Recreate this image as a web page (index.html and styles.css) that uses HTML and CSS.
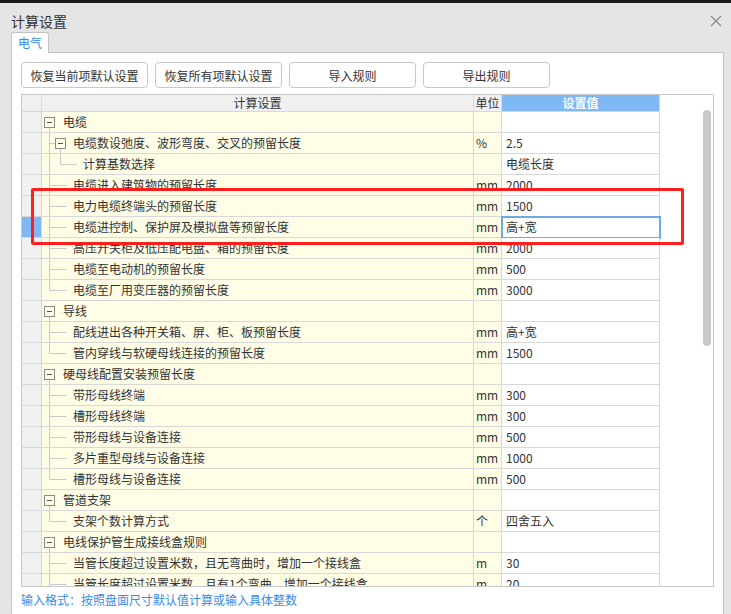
FILE: index.html
```html
<!DOCTYPE html>
<html lang="zh-CN">
<head>
<meta charset="utf-8">
<title>计算设置</title>
<link rel="stylesheet" href="styles.css">
</head>
<body>
<div class="topbar"></div>
<div class="titlebar">
  <span class="title">计算设置</span>
  <svg class="close" width="12" height="12" viewBox="0 0 12 12"><path d="M1 1L11 11M11 1L1 11"/></svg>
</div>
<div class="tabs"><div class="tab">电气</div></div>
<div class="panel">
  <div class="toolbar">
    <button class="btn">恢复当前项默认设置</button>
    <button class="btn">恢复所有项默认设置</button>
    <button class="btn">导入规则</button>
    <button class="btn">导出规则</button>
  </div>
  <div class="grid">
    <div class="table">
      <div class="row head">
        <div class="rh"></div>
        <div class="h-name">计算设置</div>
        <div class="h-unit">单位</div>
        <div class="h-val">设置值</div>
      </div>

      <div class="row">
        <div class="rh"></div>
        <div class="c-name"><svg class="tw" width="21" height="20"><rect class="bx" x="2.5" y="5.5" width="10" height="10"/><path class="mn" d="M5 10.5h5"/><path class="ln" d="M7.5 16V20"/></svg>电缆</div>
        <div class="c-unit"></div>
        <div class="c-val"></div>
      </div>
      <div class="row">
        <div class="rh"></div>
        <div class="c-name"><svg class="tw" width="31" height="20"><path class="ln" d="M7.5 0V20M8 10.5h5M18.5 16V20"/><rect class="bx" x="13.5" y="5.5" width="10" height="10"/><path class="mn" d="M16 10.5h5"/></svg>电缆数设弛度、波形弯度、交叉的预留长度</div>
        <div class="c-unit">%</div>
        <div class="c-val">2.5</div>
      </div>
      <div class="row">
        <div class="rh"></div>
        <div class="c-name"><svg class="tw" width="41" height="20"><path class="ln" d="M7.5 0V20M18.5 0V10.5M18.5 10.5H35"/></svg>计算基数选择</div>
        <div class="c-unit"></div>
        <div class="c-val">电缆长度</div>
      </div>
      <div class="row">
        <div class="rh"></div>
        <div class="c-name"><svg class="tw" width="31" height="20"><path class="ln" d="M7.5 0V20M7.5 10.5H24.5"/></svg>电缆进入建筑物的预留长度</div>
        <div class="c-unit">mm</div>
        <div class="c-val">2000</div>
      </div>
      <div class="row">
        <div class="rh"></div>
        <div class="c-name"><svg class="tw" width="31" height="20"><path class="ln" d="M7.5 0V20M7.5 10.5H24.5"/></svg>电力电缆终端头的预留长度</div>
        <div class="c-unit">mm</div>
        <div class="c-val">1500</div>
      </div>
      <div class="row sel">
        <div class="rh"></div>
        <div class="c-name"><svg class="tw" width="31" height="20"><path class="ln" d="M7.5 0V20M7.5 10.5H24.5"/></svg>电缆进控制、保护屏及模拟盘等预留长度</div>
        <div class="c-unit">mm</div>
        <div class="c-val">高+宽</div>
      </div>
      <div class="row">
        <div class="rh"></div>
        <div class="c-name"><svg class="tw" width="31" height="20"><path class="ln" d="M7.5 0V20M7.5 10.5H24.5"/></svg>高压开关柜及低压配电盘、箱的预留长度</div>
        <div class="c-unit">mm</div>
        <div class="c-val">2000</div>
      </div>
      <div class="row">
        <div class="rh"></div>
        <div class="c-name"><svg class="tw" width="31" height="20"><path class="ln" d="M7.5 0V20M7.5 10.5H24.5"/></svg>电缆至电动机的预留长度</div>
        <div class="c-unit">mm</div>
        <div class="c-val">500</div>
      </div>
      <div class="row">
        <div class="rh"></div>
        <div class="c-name"><svg class="tw" width="31" height="20"><path class="ln" d="M7.5 0V10.5M7.5 10.5H24.5"/></svg>电缆至厂用变压器的预留长度</div>
        <div class="c-unit">mm</div>
        <div class="c-val">3000</div>
      </div>

      <div class="row">
        <div class="rh"></div>
        <div class="c-name"><svg class="tw" width="21" height="20"><rect class="bx" x="2.5" y="5.5" width="10" height="10"/><path class="mn" d="M5 10.5h5"/><path class="ln" d="M7.5 16V20"/></svg>导线</div>
        <div class="c-unit"></div>
        <div class="c-val"></div>
      </div>
      <div class="row">
        <div class="rh"></div>
        <div class="c-name"><svg class="tw" width="31" height="20"><path class="ln" d="M7.5 0V20M7.5 10.5H24.5"/></svg>配线进出各种开关箱、屏、柜、板预留长度</div>
        <div class="c-unit">mm</div>
        <div class="c-val">高+宽</div>
      </div>
      <div class="row">
        <div class="rh"></div>
        <div class="c-name"><svg class="tw" width="31" height="20"><path class="ln" d="M7.5 0V10.5M7.5 10.5H24.5"/></svg>管内穿线与软硬母线连接的预留长度</div>
        <div class="c-unit">mm</div>
        <div class="c-val">1500</div>
      </div>

      <div class="row">
        <div class="rh"></div>
        <div class="c-name"><svg class="tw" width="21" height="20"><rect class="bx" x="2.5" y="5.5" width="10" height="10"/><path class="mn" d="M5 10.5h5"/><path class="ln" d="M7.5 16V20"/></svg>硬母线配置安装预留长度</div>
        <div class="c-unit"></div>
        <div class="c-val"></div>
      </div>
      <div class="row">
        <div class="rh"></div>
        <div class="c-name"><svg class="tw" width="31" height="20"><path class="ln" d="M7.5 0V20M7.5 10.5H24.5"/></svg>带形母线终端</div>
        <div class="c-unit">mm</div>
        <div class="c-val">300</div>
      </div>
      <div class="row">
        <div class="rh"></div>
        <div class="c-name"><svg class="tw" width="31" height="20"><path class="ln" d="M7.5 0V20M7.5 10.5H24.5"/></svg>槽形母线终端</div>
        <div class="c-unit">mm</div>
        <div class="c-val">300</div>
      </div>
      <div class="row">
        <div class="rh"></div>
        <div class="c-name"><svg class="tw" width="31" height="20"><path class="ln" d="M7.5 0V20M7.5 10.5H24.5"/></svg>带形母线与设备连接</div>
        <div class="c-unit">mm</div>
        <div class="c-val">500</div>
      </div>
      <div class="row">
        <div class="rh"></div>
        <div class="c-name"><svg class="tw" width="31" height="20"><path class="ln" d="M7.5 0V20M7.5 10.5H24.5"/></svg>多片重型母线与设备连接</div>
        <div class="c-unit">mm</div>
        <div class="c-val">1000</div>
      </div>
      <div class="row">
        <div class="rh"></div>
        <div class="c-name"><svg class="tw" width="31" height="20"><path class="ln" d="M7.5 0V10.5M7.5 10.5H24.5"/></svg>槽形母线与设备连接</div>
        <div class="c-unit">mm</div>
        <div class="c-val">500</div>
      </div>

      <div class="row">
        <div class="rh"></div>
        <div class="c-name"><svg class="tw" width="21" height="20"><rect class="bx" x="2.5" y="5.5" width="10" height="10"/><path class="mn" d="M5 10.5h5"/><path class="ln" d="M7.5 16V20"/></svg>管道支架</div>
        <div class="c-unit"></div>
        <div class="c-val"></div>
      </div>
      <div class="row">
        <div class="rh"></div>
        <div class="c-name"><svg class="tw" width="31" height="20"><path class="ln" d="M7.5 0V10.5M7.5 10.5H24.5"/></svg>支架个数计算方式</div>
        <div class="c-unit">个</div>
        <div class="c-val">四舍五入</div>
      </div>

      <div class="row">
        <div class="rh"></div>
        <div class="c-name"><svg class="tw" width="21" height="20"><rect class="bx" x="2.5" y="5.5" width="10" height="10"/><path class="mn" d="M5 10.5h5"/><path class="ln" d="M7.5 16V20"/></svg>电线保护管生成接线盒规则</div>
        <div class="c-unit"></div>
        <div class="c-val"></div>
      </div>
      <div class="row">
        <div class="rh"></div>
        <div class="c-name"><svg class="tw" width="31" height="20"><path class="ln" d="M7.5 0V20M7.5 10.5H24.5"/></svg>当管长度超过设置米数，且无弯曲时，增加一个接线盒</div>
        <div class="c-unit">m</div>
        <div class="c-val">30</div>
      </div>
      <div class="row">
        <div class="rh"></div>
        <div class="c-name"><svg class="tw" width="31" height="20"><path class="ln" d="M7.5 0V20M7.5 10.5H24.5"/></svg>当管长度超过设置米数，且有1个弯曲，增加一个接线盒</div>
        <div class="c-unit">m</div>
        <div class="c-val">20</div>
      </div>
    </div>
    <div class="vscroll"><div class="thumb"></div></div>
  </div>
  <div class="hint">输入格式：按照盘面尺寸默认值计算或输入具体整数</div>
</div>
<div class="annot"></div>
</body>
</html>
```

FILE: styles.css
```css
* { box-sizing: border-box; }

body {
  margin: 0;
  width: 731px;
  height: 614px;
  overflow: hidden;
  position: relative;
  background: #e5e5e5;
  font-family: "Noto Sans CJK SC", "Microsoft YaHei", sans-serif;
  color: #333;
  font-size: 12px;
}

.topbar {
  height: 3px;
  background: #1c1c1c;
}

.titlebar {
  height: 29px;
  padding: 8px 9px 0 11px;
  display: flex;
  justify-content: space-between;
  align-items: flex-start;
}

.title {
  font-size: 14px;
  line-height: 21px;
  color: #333;
}

.close {
  margin-top: 4px;
}
.close path {
  stroke: #8c8c8c;
  stroke-width: 1.2;
  fill: none;
}

.tabs {
  display: flex;
  padding-left: 11px;
}

.tab {
  position: relative;
  z-index: 1;
  height: 21px;
  margin-bottom: -1px;
  padding: 0 6px;
  background: #fff;
  border: 1px solid #c3c3c3;
  border-bottom: none;
  border-radius: 3px 3px 0 0;
  color: #2f8ae0;
  font-size: 12px;
  line-height: 20px;
}

.panel {
  margin-left: 11px;
  width: 713px;
  height: 562px;
  background: #fff;
  border: 1px solid #c3c3c3;
  border-bottom: none;
  padding: 9px 0 0 9px;
}

.toolbar {
  display: flex;
  gap: 7px;
}

.btn {
  width: 127px;
  height: 26px;
  border: 1px solid #c8c8c8;
  border-radius: 4px;
  background: #fff;
  color: #333;
  font-family: inherit;
  font-size: 12px;
  padding: 0;
}

.grid {
  margin-top: 6px;
  width: 693px;
  height: 493px;
  border: 1px solid #c8c8c8;
  display: flex;
  overflow: hidden;
}

.table {
  width: 638px;
  flex: none;
}

.row {
  display: grid;
  grid-template-columns: 20px 432px 28px 158px;
  height: 21px;
}

.row > div {
  border-right: 1px solid #d8d8d8;
  border-bottom: 1px solid #d8d8d8;
  line-height: 20px;
  white-space: nowrap;
  overflow: hidden;
}

.row.head {
  height: 17px;
}
.row.head > div {
  line-height: 16px;
  background: #f0f0f0;
  text-align: center;
}
.row.head > .h-val {
  background: #80b8f4;
  color: #fff;
  font-weight: bold;
}

.rh {
  background: #f0f0f0;
}
.row.sel .rh {
  background: #80b8f4;
}

.c-name {
  background: #fffde6;
  display: flex;
  align-items: center;
}
.c-unit {
  background: #fffde6;
  padding-left: 2px;
}
.c-val {
  background: #fff;
  padding-left: 4px;
}
.row.sel .c-val {
  outline: 2px solid #70a9e6;
  outline-offset: -1px;
}

.tw {
  flex: none;
  display: block;
}
.tw .ln {
  stroke: #c9c9c9;
  stroke-width: 1;
  fill: none;
}
.tw .bx {
  stroke: #8a8a8a;
  stroke-width: 1;
  fill: none;
}
.tw .mn {
  stroke: #555;
  stroke-width: 1;
  fill: none;
}

.vscroll {
  flex: 1;
  padding: 15px 0 0 43px;
}
.thumb {
  width: 8px;
  height: 236px;
  border-radius: 4px;
  background: #c8c8c8;
}

.hint {
  margin-top: 4px;
  line-height: 18px;
  font-size: 12px;
  color: #3a8be2;
}

.annot {
  position: absolute;
  left: 31px;
  top: 188px;
  width: 653px;
  height: 57px;
  border: 3px solid #ff1f1f;
  border-radius: 2px;
}
```
